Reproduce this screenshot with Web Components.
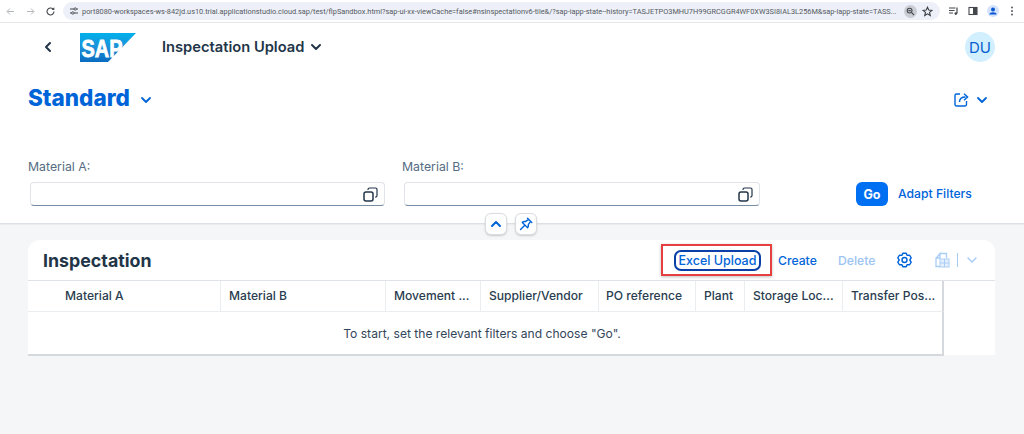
<!DOCTYPE html>
<html><head><meta charset="utf-8">
<style>
html,body{margin:0;padding:0;height:434px;overflow:hidden;background:#f5f6f7;font-family:Inter,"Noto Sans",sans-serif;}
</style></head><body>
<browser-bar></browser-bar>
<app-header></app-header>
<filter-bar></filter-bar>
<table-card></table-card>
<script>
const CH=(c,w=2)=>`<svg width="12" height="12" viewBox="0 0 12 12"><path d="M2 4l4 4 4-4" fill="none" stroke="${c}" stroke-width="${w}" stroke-linecap="round" stroke-linejoin="round"/></svg>`;
function gear(){let p=[];for(let i=0;i<6;i++){const a=i*60-90;[[5.3,-30],[7,-13],[7,13]].forEach(([r,d])=>{const t=(a+d)*Math.PI/180;p.push((7.5+r*Math.cos(t)).toFixed(2)+','+(8+r*Math.sin(t)).toFixed(2));});}return p.join(' ');}
function def(name,css,html){customElements.define(name,class extends HTMLElement{constructor(){super();this.attachShadow({mode:'open'}).innerHTML=`<style>${css}</style>${html}`;}});}

def('browser-bar',`
:host{display:flex;align-items:center;height:23px;box-sizing:border-box;background:#fff;border-bottom:1px solid #e6e7ea;font-family:Roboto,"Noto Sans",sans-serif;}
.nav{display:flex;align-items:center;gap:9px;padding-left:5px;width:63px;box-sizing:border-box;flex:none}
.nav svg{display:block}
.url{flex:1 1 auto;min-width:0;height:18px;background:#edf0f8;border-radius:9px;display:flex;align-items:center;padding:0 7px 0 4px;font-size:7.37px;color:#555a62;white-space:nowrap}
.t{flex:1;min-width:0;margin-left:3px}
.ext{flex:none;display:flex;align-items:center;gap:9px;width:84px;justify-content:flex-end;padding-right:10px;box-sizing:border-box}
.zoom{width:13px;height:13px;border-radius:50%;background:#c9ccd3;display:flex;align-items:center;justify-content:center;margin-right:5px;flex:none}
`,`
<div class="nav">
<svg width="11" height="11" viewBox="0 0 11 11"><path d="M9 5.500H2.500M5 2.500l-3 3 3 3" fill="none" stroke="#b3b6bb" stroke-width="1"/></svg>
<svg width="11" height="11" viewBox="0 0 11 11"><path d="M2 5.500h6.500M6 2.500l3 3-3 3" fill="none" stroke="#b3b6bb" stroke-width="1"/></svg>
<svg width="11" height="11" viewBox="0 0 11 11"><path d="M9 5.500a3.500 3.500 0 1 1-1-2.500" fill="none" stroke="#44474c" stroke-width="1.100"/><path d="M9.300 1.300v2.600H6.700z" fill="#44474c"/></svg>
</div>
<div class="url">
<svg width="10" height="10" viewBox="0 0 10 10" style="flex:none;margin-left:2px"><path d="M1 3h4M7.500 3H9M1 7h1.500M5 7h4" stroke="#44474c" stroke-width="1" fill="none"/><circle cx="6.200" cy="3" r="1.200" fill="none" stroke="#44474c" stroke-width=".9"/><circle cx="3.800" cy="7" r="1.200" fill="none" stroke="#44474c" stroke-width=".9"/></svg>
<span class="t">port8080-workspaces-ws-842jd.us10.trial.applicationstudio.cloud.sap/test/flpSandbox.html?sap-ui-xx-viewCache=false#nsinspectationv6-tile&amp;/?sap-iapp-state--history=TASJETPO3MHU7H99GRCGGR4WF0XW3SI8IAL3L256M&amp;sap-iapp-state=TASS...</span>
<span class="zoom"><svg width="9" height="9" viewBox="0 0 9 9"><circle cx="3.600" cy="3.600" r="2.400" fill="none" stroke="#44474c" stroke-width="1.100"/><path d="M5.400 5.400L8 8M2.400 3.600h2.400" stroke="#44474c" stroke-width="1.100"/></svg></span>
<svg width="11" height="11" viewBox="0 0 11 11" style="flex:none"><path d="M5.500 1.200l1.300 2.900 3.100.3-2.400 2 .8 3.100-2.800-1.700-2.800 1.700.8-3.100-2.400-2 3.100-.3z" fill="none" stroke="#3c3f44" stroke-width="1.100"/></svg>
</div>
<div class="ext">
<svg width="10" height="10" viewBox="0 0 10 10"><path d="M0 2h6.500M0 4.500h5.500M0 7h4" stroke="#44474c" stroke-width="1.100"/><path d="M8 1.500V7.400" stroke="#44474c" stroke-width="1.200"/><circle cx="6.800" cy="7.600" r="1.300" fill="#44474c"/></svg>
<svg width="10" height="10" viewBox="0 0 10 10"><rect x="1" y="1.500" width="8" height="7" fill="none" stroke="#44474c" stroke-width="1.100"/><rect x="5" y="1.500" width="4" height="7" fill="#44474c"/></svg>
<svg width="12" height="12" viewBox="0 0 12 12"><circle cx="6" cy="6" r="6" fill="#d3e3fd"/><circle cx="6" cy="4.600" r="2" fill="#0b57d0"/><path d="M2.400 9.400c0-3 7.200-3 7.200 0z" fill="#0b57d0"/></svg>
<svg width="4" height="10" viewBox="0 0 4 10" style="margin-left:2px"><circle cx="2" cy="1.500" r=".9" fill="#44474c"/><circle cx="2" cy="5" r=".9" fill="#44474c"/><circle cx="2" cy="8.500" r=".9" fill="#44474c"/></svg>
</div>`);

def('app-header',`
:host{display:flex;flex-direction:column;background:#fff;height:116px;box-sizing:border-box;}
.shell{display:flex;align-items:center;height:48px;padding:0 29px 0 43px}
.back{width:37px;display:flex}
.logo{display:block;margin-right:26px}
.title{font-size:14.700px;font-weight:600;color:#223548}
.title svg{margin-left:6px;vertical-align:-1px}
.sp{flex:1}
.av{width:30px;height:30px;border-radius:50%;background:#d1efff;color:#0a5fd0;font-size:15px;display:flex;align-items:center;justify-content:center}
.var{display:flex;align-items:center;padding:0 36px 0 28px;height:36px;margin-top:8px}
h1{margin:0;font-size:22.500px;font-weight:800;color:#0064d9}
.var>svg.c{margin-left:10px;margin-top:5px}
.share{display:flex;align-items:center;gap:7px;margin-top:5px}
`,`
<div class="shell">
<span class="back"><svg width="10" height="12" viewBox="0 0 10 12"><path d="M7 2L3 6l4 4" fill="none" stroke="#223548" stroke-width="2" stroke-linecap="round" stroke-linejoin="round"/></svg></span>
<svg class="logo" width="56" height="29" viewBox="0 0 56 29"><defs><linearGradient id="g" x1="0" y1="0" x2="0" y2="1"><stop offset="0" stop-color="#00b1eb"/><stop offset=".5" stop-color="#1d90d8"/><stop offset="1" stop-color="#0a6cc0"/></linearGradient></defs><path d="M0 0H56L28 29H0z" fill="url(#g)"/><text x="1.500" y="23.500" font-family="Liberation Sans" font-weight="700" font-size="24" fill="#fff" textLength="41" lengthAdjust="spacingAndGlyphs" stroke="#fff" stroke-width=".8">SAP</text></svg>
<span class="title">Inspectation Upload${CH('#223548')}</span>
<span class="sp"></span>
<span class="av">DU</span>
</div>
<div class="var">
<h1>Standard</h1>
<svg class="c" width="12" height="12" viewBox="0 0 12 12"><path d="M2 4l4 4 4-4" fill="none" stroke="#0064d9" stroke-width="1.800" stroke-linecap="round" stroke-linejoin="round"/></svg>
<span class="sp"></span>
<span class="share">
<svg width="15" height="15" viewBox="0 0 15 15"><path d="M12.500 9v3.500a1.500 1.500 0 0 1-1.500 1.500H2.500A1.500 1.500 0 0 1 1 12.500V3.500A1.500 1.500 0 0 1 2.500 2H6" fill="none" stroke="#0064d9" stroke-width="1.400"/><path d="M5.500 10c0-3.500 2.500-5 6-5M10 1.800L13.600 5 10 8.200" fill="none" stroke="#0064d9" stroke-width="1.400"/></svg>
<svg width="12" height="12" viewBox="0 0 12 12"><path d="M2 4l4 4 4-4" fill="none" stroke="#0064d9" stroke-width="1.800" stroke-linecap="round" stroke-linejoin="round"/></svg>
</span>
</div>`);

def('value-input',`
:host{display:flex;flex-direction:column;gap:8px;width:357px;}
label{font-size:12.300px;color:#556b82;line-height:15px}
.box{margin-left:2px;height:24px;box-sizing:border-box;background:#fff;border:1px solid #e0e3e7;border-bottom:1.500px solid #758ca4;border-radius:4px;display:flex;align-items:center;justify-content:flex-end;padding-right:6px}
`,`<label><slot></slot></label><div class="box"><svg width="15" height="15" viewBox="0 0 15 15"><rect x="1" y="5" width="9" height="9" rx="2" fill="none" stroke="#223548" stroke-width="1.500"/><path d="M5 3V2.500A1.500 1.500 0 0 1 6.500 1h6A1.500 1.500 0 0 1 14 2.500v6A1.500 1.500 0 0 1 12.500 10H12" fill="none" stroke="#223548" stroke-width="1.200"/></svg></div>`);

def('filter-bar',`
:host{display:block;position:relative;background:#fff;height:85px;box-sizing:border-box;border-bottom:1px solid #dcdfe3;box-shadow:0 1px 1px rgba(0,0,0,.04);padding:0 53px 0 28px;}
.row{display:flex;align-items:flex-end;height:67px}
.f{display:flex;gap:17px}
.sp{flex:1}
.go{width:32px;height:24px;border-radius:6px;background:#0070f2;color:#fff;font-size:12.500px;font-weight:700;display:flex;align-items:center;justify-content:center}
.ad{margin-left:10px;font-size:12.200px;font-weight:500;color:#0064d9;line-height:24px;width:73px;white-space:nowrap}
.btns{position:absolute;left:485px;top:74px;display:flex;gap:8px}
.b{width:22px;height:22px;box-sizing:border-box;background:#fff;border-radius:6px;border:1px solid #d9dde2;box-shadow:0 1px 2px rgba(0,0,0,.18);display:flex;align-items:center;justify-content:center}
`,`
<div class="row"><div class="f"><value-input>Material A:</value-input><value-input style="width:358px">Material B:</value-input></div><span class="sp"></span><span class="go">Go</span><span class="ad">Adapt Filters</span></div>
<div class="btns"><span class="b"><svg width="12" height="12" viewBox="0 0 12 12"><path d="M2 8l4-4 4 4" fill="none" stroke="#0064d9" stroke-width="2" stroke-linecap="round" stroke-linejoin="round"/></svg></span>
<span class="b"><svg width="14" height="14" viewBox="0 0 14 14"><path d="M8.500 1.200l4.300 4.300M9.700 2.400L6.300 4.700c-1-.3-2.200 0-3 .7l5.300 5.300c.7-.8 1-2 .7-3l2.300-3.400M5.800 8.200L1.500 12.500" fill="none" stroke="#0064d9" stroke-width="1.400" stroke-linejoin="round" stroke-linecap="round"/></svg></span></div>`);

def('table-card',`
:host{display:block;position:relative;margin:16px 29px 0 28px;background:#fff;border-radius:12px 12px 0 0;height:115px;}
.bar{display:flex;align-items:center;height:40px;padding:0 17px 0 15px;box-sizing:border-box}
h2{margin:0;font-size:17.800px;font-weight:700;color:#223548}
.sp{flex:1}
.acts{display:flex;align-items:center;font-size:12.200px;font-weight:500;color:#0064d9}
.xl{width:87px;height:21px;box-sizing:border-box;border:2px solid #0a3fa8;border-radius:7px;display:flex;align-items:center;justify-content:center;font-size:12.500px}
.cr{margin-left:17px;width:38px;white-space:nowrap}
.de{margin-left:22px;width:37px;color:#9cc4f2;white-space:nowrap}
.set{margin-left:22px;display:flex}
.ex{margin-left:23px;display:flex;align-items:center}
.red{position:absolute;left:633px;top:4px;width:111px;height:32px;box-sizing:border-box;border:2px solid #e5403f;box-shadow:0 1px 3px rgba(0,0,0,.25);pointer-events:none}
.grid{display:grid;grid-template-columns:193px 165px 95px 118px 97px 49px 98px 101px 51px;grid-template-rows:31px 44px;border-top:1px solid #dfe3e7;font-size:12.100px;color:#223548}
.h{font-weight:500;display:flex;align-items:center;padding:0 0 1px 8px;border-right:1px solid #ebeef0;border-bottom:1px solid #ebeef0;box-sizing:border-box;white-space:nowrap;overflow:hidden;color:#2a3d50}
.h:first-child{padding-left:37px}
.h.po{padding-left:7px}
.h.last{border-right:2px solid #d5d8dc}
.h.x{border:0;background:#fff}
.msg{grid-column:1/9;display:flex;align-items:center;justify-content:center;padding-right:6px;border-right:2px solid #d5d8dc;border-bottom:2px solid #d5d8dc;box-sizing:border-box;color:#32465a}
`,`
<div class="bar"><h2>Inspectation</h2><span class="sp"></span><div class="acts">
<span class="xl">Excel Upload</span><span class="cr">Create</span><span class="de">Delete</span>
<span class="set"><svg width="15" height="16" viewBox="0 0 15 16"><polygon points="${gear()}" fill="none" stroke="#0064d9" stroke-width="1.400" stroke-linejoin="round"/><circle cx="7.500" cy="8" r="2.500" fill="none" stroke="#0064d9" stroke-width="1.400"/></svg></span>
<span class="ex"><svg width="15" height="16" viewBox="0 0 15 16"><path d="M5 1.500h6.500V6M1 6.500l4-5V6H1v8.500h4" fill="none" stroke="#a9cdf6" stroke-width="1.300"/><rect x="5" y="7" width="9" height="8" fill="#e5f0fc" stroke="#a9cdf6"/><path d="M9.500 7v8M5 11h9" stroke="#a9cdf6"/></svg><span style="width:1px;height:14px;background:#a9cdf6;margin:0 8px 0 7px"></span><svg width="12" height="12" viewBox="0 0 12 12"><path d="M2 4l4 4 4-4" fill="none" stroke="#a9cdf6" stroke-width="1.500" stroke-linecap="round" stroke-linejoin="round"/></svg></span>
</div></div>
<div class="grid">
<div class="h">Material A</div><div class="h">Material B</div><div class="h">Movement ...</div><div class="h">Supplier/Vendor</div><div class="h po">PO reference</div><div class="h">Plant</div><div class="h">Storage Loc...</div><div class="h last">Transfer Pos...</div><div class="h x"></div>
<div class="msg">To start, set the relevant filters and choose "Go".</div>
</div>
<div class="red"></div>`);
</script>
</body></html>
